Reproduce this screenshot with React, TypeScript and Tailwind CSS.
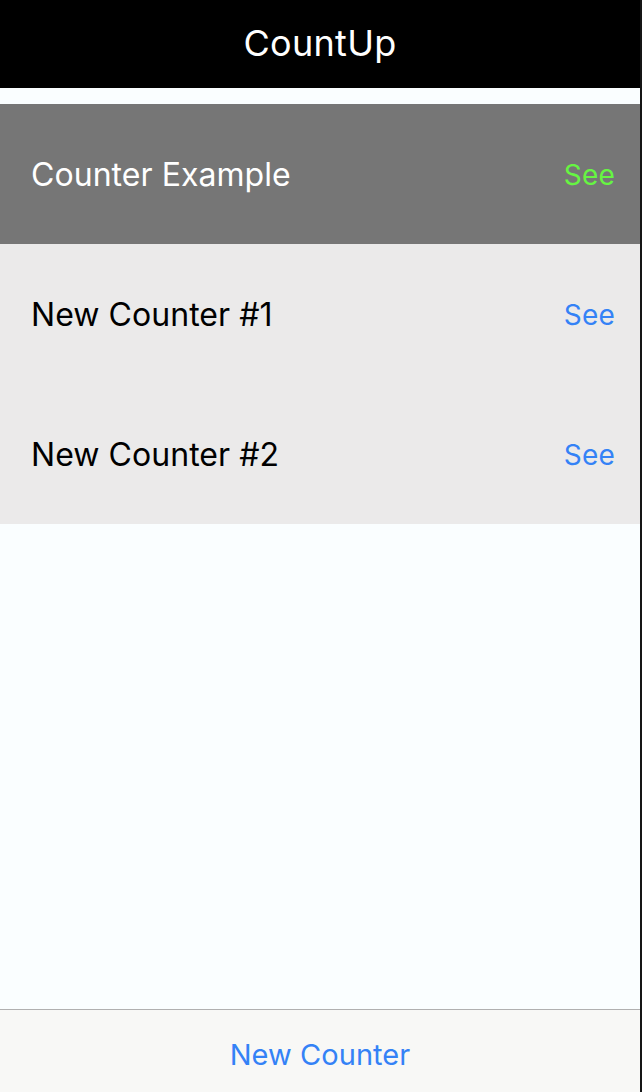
const rows = [
  { name: 'Counter Example', selected: true },
  { name: 'New Counter #1', selected: false },
  { name: 'New Counter #2', selected: false },
];

export default function App() {
  return (
    <div className="flex h-[1092px] w-[642px] bg-[#151515] font-['Inter',sans-serif]">
      <div className="flex h-full w-[640px] flex-col bg-[#fafeff]">
        {/* HEADER */}
        <div className="flex h-[88px] items-center justify-center bg-black pb-[2px] text-[36px] tracking-[0.3px] text-white">
          CountUp
        </div>
        <div className="h-[16px]" />

        {/* LIST */}
        <div className="flex flex-col">
          {rows.map((row) => (
            <div
              key={row.name}
              className={
                row.selected
                  ? 'flex h-[140px] items-center justify-between bg-[#767676] pt-[2px] pl-[31px] pr-[25px] text-white'
                  : 'flex h-[140px] items-center justify-between bg-[#ebeaea] pt-[2px] pl-[31px] pr-[25px] text-black'
              }
            >
              <span className="text-[32px] tracking-[0.05px]">{row.name}</span>
              <span className={row.selected ? 'text-[28px] tracking-[0.2px] text-[#66f542]' : 'text-[28px] tracking-[0.2px] text-[#3482f6]'}>
                See
              </span>
            </div>
          ))}
        </div>

        <div className="flex-1" />

        {/* BOTTOM BAR */}
        <div className="flex h-[83px] items-center justify-center border-t border-[#b0b0b0] bg-[#f8f8f6] pt-[8px] text-[29px] tracking-[0.05px] text-[#3482f6]">
          New Counter
        </div>
      </div>
    </div>
  );
}
